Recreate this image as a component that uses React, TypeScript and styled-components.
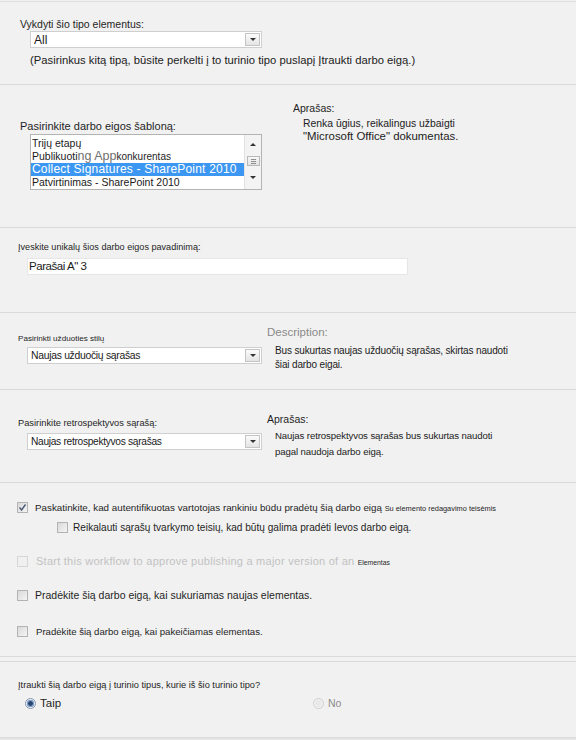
import React from "react";
import styled, { createGlobalStyle } from "styled-components";

const Global = createGlobalStyle`
  html, body { margin: 0; padding: 0; background: #f1f1f1; }
  body { font-family: "Liberation Sans", Arial, sans-serif; color: #1f1f1f; }
`;

const Page = styled.div`
  width: 576px;
  height: 739px;
  margin-top: 1px;
  border-top: 1px solid #dedede;
  background: #f1f1f1;
  display: flex;
  flex-direction: column;
  box-sizing: border-box;
`;

const Section = styled.section<{ $h: number; $pt?: number; $top?: boolean }>`
  height: ${(p) => p.$h}px;
  flex: none;
  box-sizing: border-box;
  padding-top: ${(p) => p.$pt ?? 0}px;
  border-bottom: 1px solid #dadada;
  ${(p) => (p.$top ? "border-top: 1px solid #dadada; margin-top: 4px;" : "")}
`;

const Footer = styled.div`
  flex: 1;
  background: #e4e4e4;
`;

const Split = styled.div<{ $left: number }>`
  display: grid;
  grid-template-columns: ${(p) => p.$left}px 1fr;
  height: 100%;
  align-items: start;
`;

const Col = styled.div<{ $pt?: number; $pl?: number }>`
  display: flex;
  flex-direction: column;
  align-items: flex-start;
  padding-top: ${(p) => p.$pt ?? 0}px;
  padding-left: ${(p) => p.$pl ?? 0}px;
`;

const Label = styled.div<{ $size?: number; $lh?: number; $color?: string; $mt?: number }>`
  font-size: ${(p) => p.$size ?? 11}px;
  line-height: ${(p) => p.$lh ?? 14}px;
  color: ${(p) => p.$color ?? "#1f1f1f"};
  margin-top: ${(p) => p.$mt ?? 0}px;
  white-space: nowrap;
`;

const Desc = styled.div<{ $pl?: number; $mt?: number; $lh?: number }>`
  padding-left: ${(p) => p.$pl ?? 0}px;
  margin-top: ${(p) => p.$mt ?? 0}px;
  line-height: ${(p) => p.$lh ?? 14}px;
  color: #222;
`;

const Line = styled.div<{ $size?: number; $ls?: number }>`
  font-size: ${(p) => p.$size ?? 11}px;
  letter-spacing: ${(p) => p.$ls ?? 0}px;
  white-space: nowrap;
`;

const SelectBox = styled.div<{ $w: number; $ml?: number; $mt?: number }>`
  width: ${(p) => p.$w}px;
  height: 17px;
  margin-left: ${(p) => p.$ml ?? 0}px;
  margin-top: ${(p) => p.$mt ?? 0}px;
  box-sizing: border-box;
  border: 1px solid #cfcfcf;
  background: #fff;
  display: flex;
  align-items: center;
  justify-content: space-between;
  padding-left: 3px;
  padding-right: 1px;
`;

const SelectText = styled.span<{ $size?: number; $ls?: number }>`
  font-size: ${(p) => p.$size ?? 12}px;
  letter-spacing: ${(p) => p.$ls ?? 0}px;
  color: #1a1a1a;
  white-space: nowrap;
`;

const ArrowBtn = styled.span`
  width: 15px;
  height: 13px;
  box-sizing: border-box;
  border: 1px solid #c4c4c4;
  background: linear-gradient(#fbfbfb, #e4e4e4);
  display: flex;
  align-items: center;
  justify-content: center;
`;

const Tri = styled.span<{ $up?: boolean }>`
  width: 0;
  height: 0;
  border-left: 3px solid transparent;
  border-right: 3px solid transparent;
  ${(p) =>
    p.$up ? "border-bottom: 3px solid #333;" : "border-top: 3px solid #333;"}
`;

const Select = ({
  w,
  text,
  size,
  ls,
  ml,
  mt,
}: {
  w: number;
  text: React.ReactNode;
  size?: number;
  ls?: number;
  ml?: number;
  mt?: number;
}) => (
  <SelectBox $w={w} $ml={ml} $mt={mt}>
    <SelectText $size={size} $ls={ls}>
      {text}
    </SelectText>
    <ArrowBtn>
      <Tri />
    </ArrowBtn>
  </SelectBox>
);

const ListBox = styled.div`
  width: 232px;
  height: 56px;
  margin-left: 10px;
  margin-top: 1px;
  box-sizing: border-box;
  border: 1px solid #b4b4b4;
  background: #fff;
  display: flex;
  overflow: hidden;
`;

const Items = styled.div`
  flex: 1;
  padding-top: 2px;
  display: flex;
  flex-direction: column;
`;

const Item = styled.div<{ $sel?: boolean; $size?: number }>`
  height: 13px;
  line-height: 13px;
  padding-left: 1px;
  font-size: ${(p) => p.$size ?? 10.5}px;
  white-space: nowrap;
  color: ${(p) => (p.$sel ? "#fff" : "#1a1a1a")};
  background: ${(p) => (p.$sel ? "#3c97f2" : "transparent")};
  letter-spacing: ${(p) => (p.$sel ? "0.2px" : "0")};
`;

const Ghost = styled.span`
  font-size: 12.5px;
  color: #707070;
`;

const Small = styled.span<{ $size: number; $color?: string }>`
  font-size: ${(p) => p.$size}px;
  color: ${(p) => p.$color ?? "#1f1f1f"};
  letter-spacing: 0;
`;

const ScrollBar = styled.div`
  width: 17px;
  background: #f3f3f3;
  border-left: 1px solid #e2e2e2;
  display: flex;
  flex-direction: column;
  align-items: center;
  padding-top: 8px;
  box-sizing: border-box;
`;

const Thumb = styled.div`
  width: 13px;
  height: 10px;
  margin-top: 10px;
  margin-bottom: 10px;
  box-sizing: border-box;
  border: 1px solid #b9b9b9;
  background: linear-gradient(#f7f7f7, #e2e2e2);
  display: flex;
  align-items: center;
  justify-content: center;
`;

const Grip = styled.div`
  width: 5px;
  height: 5px;
  background: repeating-linear-gradient(#8f8f8f 0 1px, transparent 1px 2px);
`;

const TextInput = styled.div`
  width: 381px;
  height: 17px;
  margin-left: 9px;
  margin-top: 4px;
  box-sizing: border-box;
  border: 1px solid #e6e6e6;
  background: #fff;
  padding-left: 1px;
  font-size: 11.5px;
  letter-spacing: -0.45px;
  line-height: 15px;
  color: #1a1a1a;
`;

const CheckRow = styled.div<{ $mt?: number; $pl?: number; $gap?: number }>`
  display: flex;
  align-items: center;
  height: 16px;
  margin-top: ${(p) => p.$mt ?? 0}px;
  padding-left: ${(p) => p.$pl ?? 17}px;
  gap: ${(p) => p.$gap ?? 7}px;
`;

const Box = styled.span<{ $disabled?: boolean }>`
  width: 11px;
  height: 11px;
  flex: none;
  box-sizing: border-box;
  border: 1px solid ${(p) => (p.$disabled ? "#d6d6d6" : "#b3b3b3")};
  background: ${(p) =>
    p.$disabled ? "#f0f0f0" : "linear-gradient(135deg, #d9d9d9, #f4f4f4)"};
  display: flex;
  align-items: center;
  justify-content: center;
`;

const CheckText = styled.span<{ $size?: number; $color?: string; $ls?: number }>`
  font-size: ${(p) => p.$size ?? 11}px;
  color: ${(p) => p.$color ?? "#1f1f1f"};
  letter-spacing: ${(p) => p.$ls ?? 0}px;
  white-space: nowrap;
`;

const Check = ({ checked, disabled }: { checked?: boolean; disabled?: boolean }) => (
  <Box $disabled={disabled}>
    {checked && (
      <svg width="9" height="9" viewBox="0 0 9 9">
        <path d="M1.5 4.5 L3.6 7 L7.5 1.5" fill="none" stroke="#4a5a75" strokeWidth="1.4" />
      </svg>
    )}
  </Box>
);

const RadioRow = styled.div`
  display: grid;
  grid-template-columns: 288px auto;
  padding-left: 25px;
  margin-top: 3px;
  height: 16px;
  align-items: center;
`;

const RadioOpt = styled.label<{ $disabled?: boolean }>`
  display: flex;
  align-items: center;
  gap: 4px;
  font-size: ${(p) => (p.$disabled ? 10.5 : 11.5)}px;
  color: ${(p) => (p.$disabled ? "#8c8c8c" : "#1f1f1f")};
`;

const Circle = styled.span<{ $on?: boolean }>`
  width: 11px;
  height: 11px;
  border-radius: 50%;
  box-sizing: border-box;
  border: 1px solid ${(p) => (p.$on ? "#8a98ad" : "#cfcfcf")};
  background: ${(p) =>
    p.$on
      ? "radial-gradient(circle, #27446e 0 2px, #7f9fc8 2.5px 3.5px, #e6ecf3 4px)"
      : "radial-gradient(circle, #e9e9e9 0 3px, #f3f3f3 4px)"};
`;

export default function App() {
  return (
    <>
      <Global />
      <Page>
        <Section $h={83} $pt={15}>
          <Col $pl={20}>
            <Label $size={10.5}>Vykdyti šio tipo elementus:</Label>
            <Select w={232} ml={10} text="All" size={12} />
            <Desc $pl={10} $mt={5}>
              <Line $size={11.25}>
                (Pasirinkus kitą tipą, būsite perkelti į to turinio tipo puslapį Įtraukti darbo eigą.)
              </Line>
            </Desc>
          </Col>
        </Section>

        <Section $h={143}>
          <Split $left={270}>
            <Col $pt={34} $pl={20}>
              <Label $size={11}>Pasirinkite darbo eigos šabloną:</Label>
              <ListBox>
                <Items>
                  <Item>Trijų etapų</Item>
                  <Item>
                    Publikuoti<Ghost>ng App</Ghost>
                    <Small $size={10}>konkurentas</Small>
                  </Item>
                  <Item $sel $size={12}>
                    Collect Signatures - SharePoint 2010
                  </Item>
                  <Item>Patvirtinimas - SharePoint 2010</Item>
                </Items>
                <ScrollBar>
                  <Tri $up />
                  <Thumb>
                    <Grip />
                  </Thumb>
                  <Tri />
                </ScrollBar>
              </ListBox>
            </Col>
            <Col $pt={16} $pl={23}>
              <Label $size={10.5}>Aprašas:</Label>
              <Desc $pl={10} $mt={2} $lh={13}>
                <Line $size={10.4}>Renka ūgius, reikalingus užbaigti</Line>
                <Line $size={11.4}>"Microsoft Office" dokumentas.</Line>
              </Desc>
            </Col>
          </Split>
        </Section>

        <Section $h={85} $pt={12}>
          <Col $pl={18}>
            <Label $size={9.1}>Įveskite unikalų šios darbo eigos pavadinimą:</Label>
            <TextInput>Parašai A" 3</TextInput>
          </Col>
        </Section>

        <Section $h={77}>
          <Split $left={267}>
            <Col $pt={20} $pl={18}>
              <Label $size={8.1} $lh={12}>Pasirinkti užduoties stilų</Label>
              <Select w={235} ml={9} mt={2} text="Naujas užduočių sąrašas" size={10.4} ls={-0.3} />
            </Col>
            <Col $pt={12}>
              <Label $size={11.5} $lh={15} $color="#8a8a8a">Description:</Label>
              <Desc $pl={8} $mt={4} $lh={14}>
                <Line $size={10} $ls={-0.15}>
                  Bus sukurtas naujas užduočių sąrašas, skirtas naudoti
                </Line>
                <Line $size={10} $ls={-0.15}>
                  šiai darbo eigai.
                </Line>
              </Desc>
            </Col>
          </Split>
        </Section>

        <Section $h={93}>
          <Split $left={267}>
            <Col $pt={26} $pl={18}>
              <Label $size={9.3}>Pasirinkite retrospektyvos sąrašą:</Label>
              <Select
                w={235}
                ml={9}
                mt={3}
                size={10.2}
                ls={-0.3}
                text="Naujas retrospektyvos sąrašas"
              />
            </Col>
            <Col $pt={22}>
              <Label $size={10.5}>Aprašas:</Label>
              <Desc $pl={8} $mt={2} $lh={16}>
                <Line $size={9.6} $ls={-0.1}>
                  Naujas retrospektyvos sąrašas bus sukurtas naudoti
                </Line>
                <Line $size={9.6} $ls={-0.1}>
                  pagal naudoja darbo eigą.
                </Line>
              </Desc>
            </Col>
          </Split>
        </Section>

        <Section $h={174} $pt={16}>
          <CheckRow>
            <Check checked />
            <CheckText $size={9.8}>
              Paskatinkite, kad autentifikuotas vartotojas rankiniu būdu pradėtų šią darbo eigą{" "}
              <Small $size={7.4}>Su elemento redagavimo teisėmis</Small>
            </CheckText>
          </CheckRow>
          <CheckRow $mt={4} $pl={57} $gap={5}>
            <Check />
            <CheckText $size={10.1}>
              Reikalauti sąrašų tvarkymo teisių, kad būtų galima pradėti Ievos darbo eigą.
            </CheckText>
          </CheckRow>
          <CheckRow $mt={18} $gap={8}>
            <Check disabled />
            <CheckText $size={11} $color="#c2c2c2" $ls={0.25}>
              Start this workflow to approve publishing a major version of an{" "}
              <Small $size={6.8}>Elementas</Small>
            </CheckText>
          </CheckRow>
          <CheckRow $mt={18}>
            <Check />
            <CheckText $size={10.5}>Pradėkite šią darbo eigą, kai sukuriamas naujas elementas.</CheckText>
          </CheckRow>
          <CheckRow $mt={20} $gap={8}>
            <Check />
            <CheckText $size={9.6}>Pradėkite šią darbo eigą, kai pakeičiamas elementas.</CheckText>
          </CheckRow>
        </Section>

        <Section $h={77} $pt={16} $top>
          <Col $pl={18}>
            <Label $size={9.25}>Įtraukti šią darbo eigą į turinio tipus, kurie iš šio turinio tipo?</Label>
          </Col>
          <RadioRow>
            <RadioOpt>
              <Circle $on />
              Taip
            </RadioOpt>
            <RadioOpt $disabled>
              <Circle />
              No
            </RadioOpt>
          </RadioRow>
        </Section>
        <Footer />
      </Page>
    </>
  );
}
